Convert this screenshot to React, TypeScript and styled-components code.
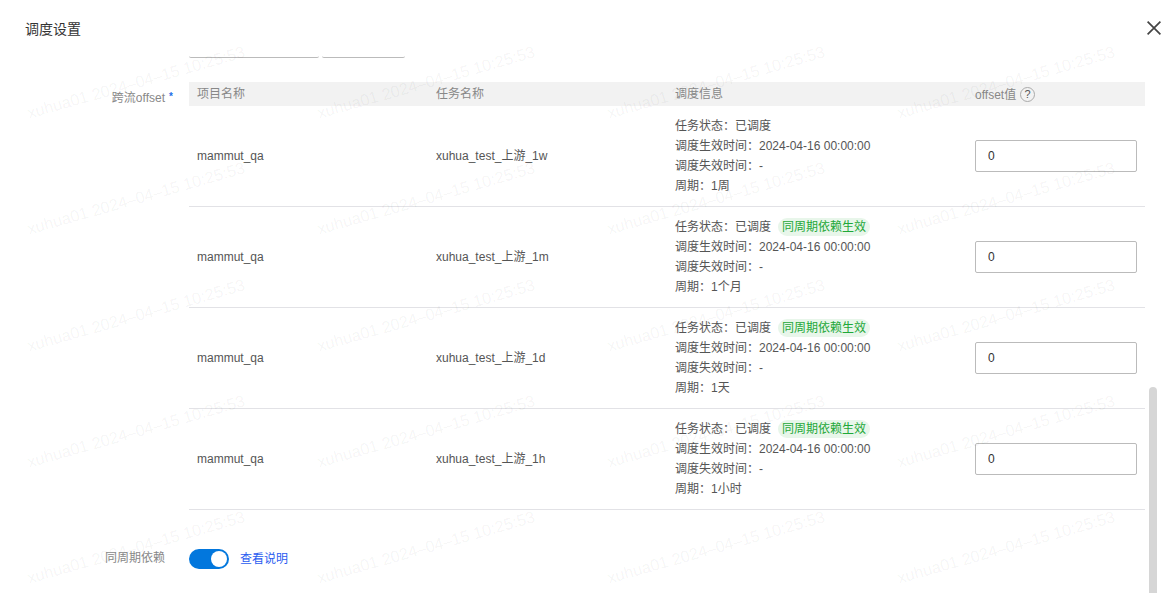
import React from 'react';
import styled, { createGlobalStyle } from 'styled-components';

const GlobalStyle = createGlobalStyle`
  html, body {
    margin: 0;
    padding: 0;
    height: 100%;
    background: #fff;
    overflow: hidden;
    font-family: "Liberation Sans", "Noto Sans CJK SC", sans-serif;
  }
`;

const Modal = styled.div`
  position: relative;
  width: 1173px;
  height: 593px;
  overflow: hidden;
  background: #fff;
  color: #555;
  font-size: 12px;
`;

const Header = styled.div`
  display: flex;
  align-items: center;
  justify-content: space-between;
  height: 56px;
  padding: 0 12px 0 25px;
  color: #333;
  font-size: 14px;
`;

const CloseButton = styled.div`
  display: flex;
  color: #444;
`;

const Body = styled.div`
  display: flex;
  flex-direction: column;
  padding-right: 28px;
`;

const StubRow = styled.div`
  display: flex;
  gap: 3px;
  height: 2px;
  margin-left: 189px;
`;

const StubInput = styled.div<{ $width: number }>`
  width: ${(p) => p.$width}px;
  height: 2px;
  box-sizing: border-box;
  border-bottom: 1px solid #bbb;
  border-radius: 0 0 2px 2px;
`;

const FormRow = styled.div<{ $top: number }>`
  display: flex;
  margin-top: ${(p) => p.$top}px;
`;

const Label = styled.div<{ $offset: number }>`
  display: flex;
  justify-content: flex-end;
  width: 165px;
  margin-right: 24px;
  padding-top: ${(p) => p.$offset}px;
  color: #888;
  line-height: 16px;
  position: relative;
`;

const Required = styled.span`
  position: absolute;
  left: 169px;
  top: 9px;
  color: #1f6fe8;
  font-size: 10px;
  font-weight: 700;
  line-height: 12px;
`;

const Table = styled.div`
  width: 956px;
  display: flex;
  flex-direction: column;
`;

const HeadRow = styled.div`
  display: grid;
  grid-template-columns: 239px 239px 300px 178px;
  align-items: center;
  height: 24px;
  background: #f2f2f2;
  color: #888;
  line-height: 20px;
`;

const HeadCell = styled.div<{ $lower?: boolean }>`
  display: flex;
  align-items: center;
  gap: 4px;
  padding: ${(p) => (p.$lower ? '1px 8px 0' : '0 8px 1px')};
`;

const HelpMark = styled.span`
  display: inline-flex;
  align-items: center;
  justify-content: center;
  width: 15px;
  height: 15px;
  box-sizing: border-box;
  border: 1px solid #aaa;
  border-radius: 50%;
  color: #555;
  font-size: 11px;
  line-height: 1;
`;

const Row = styled.div`
  display: grid;
  grid-template-columns: 239px 239px 300px 178px;
  align-items: center;
  height: 101px;
  box-sizing: border-box;
  border-bottom: 1px solid #e2e2e6;
`;

const Cell = styled.div`
  padding: 0 8px;
  line-height: 20px;
  color: #555;
`;

const InfoLine = styled.div`
  display: flex;
  align-items: center;
  height: 20px;
  line-height: 20px;
  white-space: nowrap;
`;

const Tag = styled.span`
  display: inline-block;
  height: 18px;
  margin-left: 7px;
  padding: 0 4px;
  border-radius: 9px;
  background: #e8f6ea;
  color: #1fa838;
  line-height: 18px;
`;

const OffsetInput = styled.input`
  display: block;
  width: 162px;
  height: 32px;
  box-sizing: border-box;
  padding: 0 12px;
  border: 1px solid #bbb;
  border-radius: 2px;
  background: transparent;
  color: #333;
  font-family: inherit;
  font-size: 12px;
  outline: none;
`;

const ToggleGroup = styled.div`
  display: flex;
  align-items: center;
  gap: 11px;
`;

const Toggle = styled.div`
  display: flex;
  justify-content: flex-end;
  align-items: center;
  width: 40px;
  height: 20px;
  box-sizing: border-box;
  padding: 2px;
  border-radius: 10px;
  background: #0277dd;
`;

const ToggleKnob = styled.div`
  width: 16px;
  height: 16px;
  border-radius: 50%;
  background: #fff;
`;

const LinkText = styled.a`
  color: #2a5cf0;
  line-height: 20px;
`;

const Scrollbar = styled.div`
  position: absolute;
  left: 1149px;
  top: 387px;
  bottom: -4px;
  width: 8px;
  border-radius: 4px;
  background: #d6d6d6;
`;

const WatermarkLayer = styled.div`
  position: absolute;
  left: -9px;
  top: 24px;
  display: grid;
  grid-template-columns: repeat(4, 290px);
  grid-auto-rows: 116.25px;
  pointer-events: none;
`;

const Watermark = styled.div`
  display: flex;
  align-items: center;
  justify-content: center;
  color: rgba(0, 0, 0, 0.05);
  font-size: 16.3px;
  white-space: nowrap;
  transform: rotate(-16deg);
`;

type Task = { name: string; cycle: string; sameCycle: boolean };

const tasks: Task[] = [
  { name: 'xuhua_test_上游_1w', cycle: '1周', sameCycle: false },
  { name: 'xuhua_test_上游_1m', cycle: '1个月', sameCycle: true },
  { name: 'xuhua_test_上游_1d', cycle: '1天', sameCycle: true },
  { name: 'xuhua_test_上游_1h', cycle: '1小时', sameCycle: true },
];

const App = () => {
  return (
    <Modal>
      <GlobalStyle />
      <Header>
        调度设置
        <CloseButton>
          <svg width="14" height="14" viewBox="0 0 14 14" fill="none" stroke="currentColor" strokeWidth="1.7">
            <path d="M.6.6 13.4 13.4M13.4.6.6 13.4" />
          </svg>
        </CloseButton>
      </Header>
      <Body>
        <StubRow>
          <StubInput $width={130} />
          <StubInput $width={83} />
        </StubRow>
        <FormRow $top={24}>
          <Label $offset={8}>
            跨流offset
            <Required>*</Required>
          </Label>
          <Table>
            <HeadRow>
              <HeadCell>项目名称</HeadCell>
              <HeadCell>任务名称</HeadCell>
              <HeadCell>调度信息</HeadCell>
              <HeadCell $lower>
                offset值
                <HelpMark>?</HelpMark>
              </HeadCell>
            </HeadRow>
            {tasks.map((task) => (
              <Row key={task.name}>
                <Cell>mammut_qa</Cell>
                <Cell>{task.name}</Cell>
                <Cell>
                  <InfoLine>
                    任务状态：已调度
                    {task.sameCycle && <Tag>同周期依赖生效</Tag>}
                  </InfoLine>
                  <InfoLine>调度生效时间：2024-04-16 00:00:00</InfoLine>
                  <InfoLine>调度失效时间：-</InfoLine>
                  <InfoLine>周期：{task.cycle}</InfoLine>
                </Cell>
                <Cell>
                  <OffsetInput defaultValue="0" />
                </Cell>
              </Row>
            ))}
          </Table>
        </FormRow>
        <FormRow $top={39}>
          <Label $offset={1}>同周期依赖</Label>
          <ToggleGroup>
            <Toggle>
              <ToggleKnob />
            </Toggle>
            <LinkText>查看说明</LinkText>
          </ToggleGroup>
        </FormRow>
      </Body>
      <Scrollbar />
      <WatermarkLayer>
        {Array.from({ length: 20 }, (_, i) => (
          <Watermark key={i}>xuhua01 2024–04–15 10:25:53</Watermark>
        ))}
      </WatermarkLayer>
    </Modal>
  );
};

export default App;
